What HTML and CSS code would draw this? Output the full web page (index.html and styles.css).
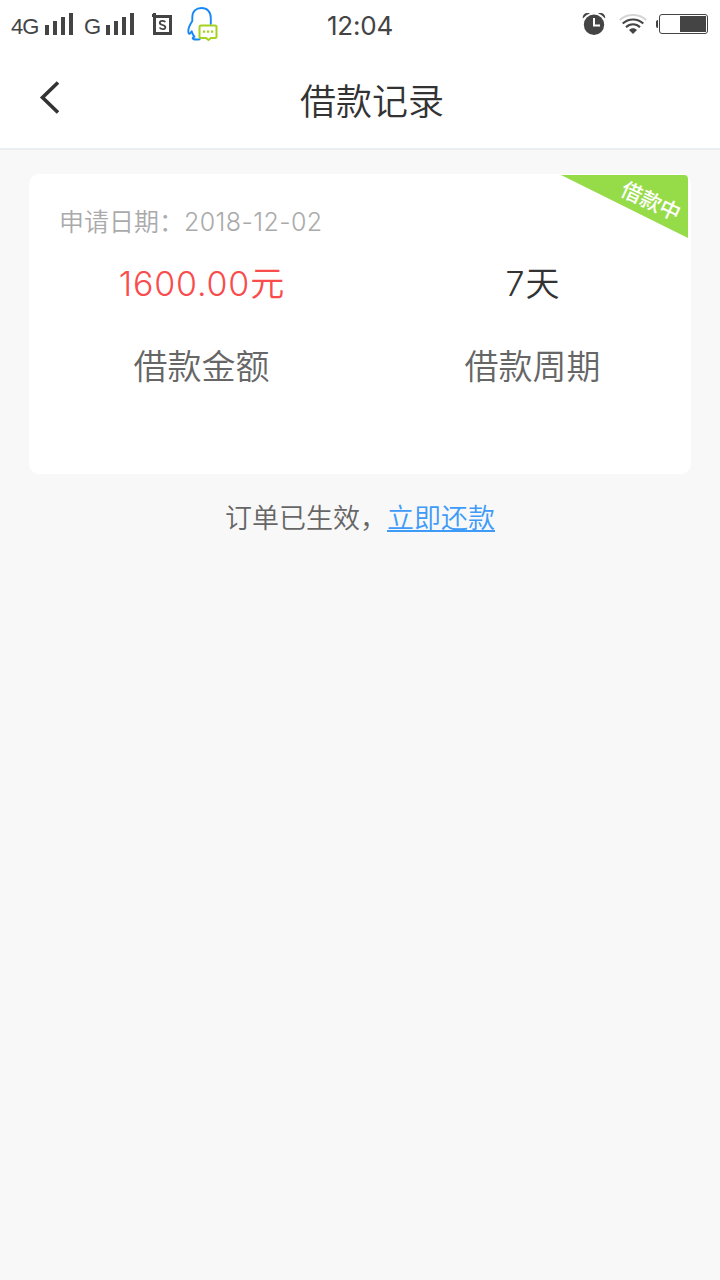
FILE: index.html
```html
<!DOCTYPE html>
<html lang="zh-CN">
<head>
    <meta charset="UTF-8">
    <meta name="viewport" content="width=device-width, initial-scale=1.0">
    <title>借款记录</title>
    <link rel="stylesheet" href="styles.css">
</head>
<body>
    <!-- 状态栏 -->
    <div class="status">
        <div class="status-left">
            <span class="net net-4g">4G</span>
            <svg class="signal" width="28" height="22" viewBox="0 0 28 22">
                <path d="M0 12h4v10H0zM8 8h4v14H8zM16 4h4v18h-4zM24 0h4v22h-4z" fill="#444"/>
            </svg>
            <span class="net net-g">G</span>
            <svg class="signal" width="28" height="22" viewBox="0 0 28 22">
                <path d="M0 12h4v10H0zM8 8h4v14H8zM16 4h4v18h-4zM24 0h4v22h-4z" fill="#444"/>
            </svg>
            <svg class="app" width="20" height="22" viewBox="0 0 20 22">
                <path d="M0 2.500h4M2.500 0v20.500h16V3.500H2.500" fill="none" stroke="#444" stroke-width="3"/>
                <path d="M13.200 9.200C12.500 7.500 7.800 7.300 7.800 10c0 2.600 5.600 1.400 5.600 4.200 0 2.700-5 2.300-5.800.3" fill="none" stroke="#444" stroke-width="1.800"/>
            </svg>
            <svg class="qq" width="32" height="36" viewBox="0 0 32 36">
                <path d="M24.800 18V12C24.800 5.500 21 2 15.500 2S6.300 5.500 6.300 11.500V15C4 18.500 2.300 22 2.300 25c0 2.500.7 3.500 1.700 2.500l1.700-2.200c.5 2.300 1.500 4 2.800 5.400-2 .9-2.300 1.800-1.300 2.300 1.500.6 4.300.6 6.500.2" fill="none" stroke="#1687f7" stroke-width="1.900" stroke-linejoin="round" stroke-linecap="round"/>
                <path d="M15 19.500h14c1 0 1.500.5 1.500 1.500v9.500c0 1-.5 1.500-1.500 1.500h-4l-2.500 2-2.500-2h-5c-1 0-1.500-.5-1.500-1.500V21c0-1 .5-1.500 1.500-1.500z" fill="#fff" stroke="#a5d221" stroke-width="2"/>
                <path d="M17 24.500h2.200v2.200H17zM21 24.500h2.200v2.200H21zM25 24.500h2.200v2.200H25z" fill="#a5d221"/>
            </svg>
        </div>
        <div class="time">12:04</div>
        <div class="status-right">
            <svg class="alarm" width="24" height="24" viewBox="0 0 24 24">
                <circle cx="12" cy="12.800" r="10.200" fill="#444"/>
                <path d="M.8 6.500C.3 2 4 .2 8 1.300Q3.500 3 .8 6.500zM23.200 6.500C23.700 2 20 .2 16 1.300Q20.500 3 23.200 6.500z" fill="#444"/>
                <path d="M12 6v7.500h6" fill="none" stroke="#fff" stroke-width="2"/>
            </svg>
            <svg class="wifi" width="28" height="22" viewBox="0 0 28 22">
                <g fill="none" stroke-width="2">
                    <path d="M.7 7C8 .2 20 .2 27.300 7" stroke="#d5d5d5"/>
                    <path d="M3.700 10.500c5.800-5.500 14.800-5.500 20.600 0M7 14.200c4-3.900 10-3.900 14 0" stroke="#444"/>
                </g>
                <path d="M10 17c2.300-2.200 5.700-2.200 8 0l-4 4z" fill="#444"/>
            </svg>
            <svg class="battery" width="52" height="20" viewBox="0 0 52 20">
                <rect x="3.500" y=".5" width="48" height="19" rx="2.500" fill="none" stroke="#444"/>
                <path d="M24 2h26v16H24z" fill="#444"/>
                <path d="M2 6v8C.5 14 0 13 0 12V8c0-1 .5-2 2-2z" fill="#444"/>
            </svg>
        </div>
    </div>

    <!-- 标题栏 -->
    <div class="header">
        <svg class="back" width="22" height="36" viewBox="0 0 22 36">
            <path d="M19 2.500L3.500 17.500 19 32.500" fill="none" stroke="#333" stroke-width="3.600"/>
        </svg>
        <div class="title">借款记录</div>
    </div>

    <!-- 借款卡片 -->
    <div class="card">
        <svg class="ribbon" width="128" height="64" viewBox="0 0 128 64">
            <path d="M0 0h123q4 0 4 4v59z" fill="#96db48"/>
        </svg>
        <span class="ribbon-text">借款中</span>
        <div class="date">申请日期：<span class="date-num">2018-12-02</span></div>
        <div class="info">
            <div class="item">
                <div class="value money"><span class="num">1600.00</span>元</div>
                <div class="label">借款金额</div>
            </div>
            <div class="item">
                <div class="value"><span class="num">7</span>天</div>
                <div class="label">借款周期</div>
            </div>
        </div>
    </div>

    <div class="tip">订单已生效，<a class="repay" href="#">立即还款</a></div>
</body>
</html>
```
FILE: styles.css
```css
body {
    margin: 0;
    min-height: 100vh;
    background-color: #f8f8f8;
    font-family: "Noto Sans CJK SC", sans-serif;
    font-weight: 350;
    color: #333;
}
svg {
    display: block;
    flex-shrink: 0;
}
.status {
    height: 50px;
    background-color: #fff;
    display: grid;
    grid-template-columns: 1fr 80px 1fr;
    color: #444;
    font-family: Inter, sans-serif;
    font-weight: 400;
}
.status-left, .status-right {
    display: flex;
    align-items: flex-start;
}
.status-left {
    padding-left: 11px;
}
.status-right {
    justify-content: flex-end;
    padding-right: 12px;
}
.net {
    font-family: "Liberation Sans", sans-serif;
    font-size: 22px;
    line-height: 26px;
    margin-top: 14px;
    letter-spacing: -1px;
}
.net-4g {
    width: 34px;
}
.net-g {
    width: 22px;
    margin-left: 11px;
}
.signal {
    margin-top: 13px;
}
.app {
    margin: 13px 0 0 18px;
}
.qq {
    margin: 6px 0 0 14px;
}
.time {
    font-size: 26px;
    line-height: 52px;
    letter-spacing: -0.2px;
    text-align: center;
}
.alarm {
    margin-top: 12px;
}
.wifi {
    margin: 13px 9px 0 13px;
}
.battery {
    margin-top: 14px;
}
.header {
    height: 98px;
    background-color: #fff;
    border-bottom: 2px solid #ebeef1;
    display: grid;
    grid-template-columns: 60px 1fr 60px;
    padding: 0 12px 0 36px;
}
.back {
    margin: 30px 0 0 3px;
}
.title {
    font-size: 36px;
    line-height: 98px;
    text-align: center;
}
.card {
    position: relative;
    box-sizing: border-box;
    width: 662px;
    height: 300px;
    margin: 24px 29px 0;
    padding-top: 27px;
    background-color: #fff;
    border-radius: 10px;
}
/* 右上角状态角标 */
.ribbon {
    position: absolute;
    top: 1px;
    right: 2px;
}
.ribbon-text {
    position: absolute;
    top: 10px;
    right: 8px;
    font-size: 21px;
    line-height: 32px;
    font-weight: 500;
    color: #fff;
    transform: rotate(25deg);
}
.date {
    padding-left: 30px;
    font-size: 25px;
    line-height: 38px;
    color: #aaa;
}
.date-num, .num {
    font-family: Inter, sans-serif;
    font-weight: 300;
}
.date-num {
    letter-spacing: 0.4px;
}
.num {
    letter-spacing: 0.8px;
}
.info {
    display: grid;
    grid-template-columns: 1fr 1fr;
    margin: 16px -7px 0 7px;
    text-align: center;
}
.value {
    font-size: 34px;
    line-height: 50px;
}
.money {
    color: #f94c4c;
}
.label {
    margin-top: 31px;
    font-size: 34px;
    line-height: 50px;
    color: #666;
}
.tip {
    margin-top: 23px;
    font-size: 27px;
    line-height: 40px;
    text-align: center;
    color: #666;
}
.repay {
    color: #3f9bf8;
}
```
